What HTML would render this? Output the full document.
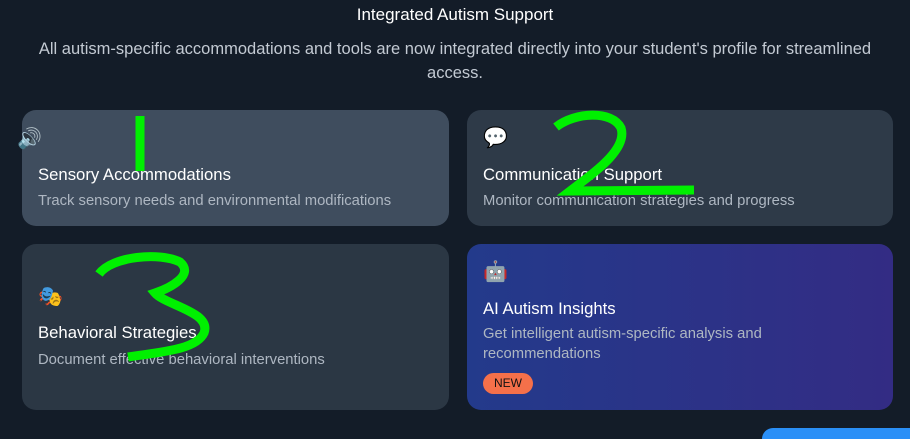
<!DOCTYPE html>
<html><head><meta charset="utf-8"><style>
*{margin:0;padding:0;box-sizing:border-box}
html,body{width:910px;height:439px;overflow:hidden;background:#131c28;font-family:"Liberation Sans",sans-serif}
#w{position:relative;width:910px;height:439px;overflow:hidden}
.t{position:absolute;top:5px;left:0;width:910px;text-align:center;color:#fff;font-size:17px}
.s{position:absolute;top:37px;left:20px;width:870px;text-align:center;color:#c3cad3;font-size:16.5px;line-height:24px}
.c{position:absolute;border-radius:14px}
.c .i{position:absolute;font-size:20px;line-height:22px}
.c h3{position:absolute;left:16px;font-weight:normal;color:#fff;font-size:16.7px;white-space:nowrap}
.c p{position:absolute;left:16px;color:#aeb7c2;font-size:14.8px;line-height:20px;white-space:nowrap}
.b{position:absolute;left:16px;top:129px;width:50px;height:21px;border-radius:11px;background:#f5704a;color:#111;font-size:12px;line-height:21px;text-align:center}
</style></head><body><div id="w">
<div class="t">Integrated Autism Support</div>
<div class="s">All autism-specific accommodations and tools are now integrated directly into your student's profile for streamlined<br>access.</div>

<div class="c" style="left:22px;top:110px;width:427px;height:116px;background:#3f4d5e">
<span class="i" style="left:-5px;top:18px">🔊</span>
<h3 style="top:55px">Sensory Accommodations</h3>
<p style="top:81px">Track sensory needs and environmental modifications</p></div>

<div class="c" style="left:467px;top:110px;width:426px;height:116px;background:#2e3a48">
<span class="i" style="left:16px;top:17px">💬</span>
<h3 style="top:55px">Communication Support</h3>
<p style="top:81px">Monitor communication strategies and progress</p></div>

<div class="c" style="left:22px;top:244px;width:427px;height:166px;background:#2b3744">
<span class="i" style="left:16px;top:42px">🎭</span>
<h3 style="top:79px">Behavioral Strategies</h3>
<p style="top:106px">Document effective behavioral interventions</p></div>

<div class="c" style="left:467px;top:244px;width:426px;height:166px;background:linear-gradient(90deg,#233a8b,#332c84)">
<span class="i" style="left:16px;top:17px">🤖</span>
<h3 style="top:55px">AI Autism Insights</h3>
<p style="top:80px">Get intelligent autism-specific analysis and<br>recommendations</p>
<div class="b">NEW</div></div>

<div style="position:absolute;left:762px;top:428px;width:148px;height:11px;border-radius:20px 0 0 0;background:#2a8ff7"></div>

<svg width="910" height="439" style="position:absolute;left:0;top:0" fill="none" stroke="#00f000" stroke-width="9">
<path d="M140,116 L140,171"/>
<path d="M556,127 C575,112 612,110 621,128 C628,150 592,174 570,191 L694,190"/>
<path d="M99,274 C112,256 160,252 180,262 C195,275 170,288 155,293 C165,305 212,312 204,333 C196,350 160,352 128,357"/>
</svg>
</div></body></html>
